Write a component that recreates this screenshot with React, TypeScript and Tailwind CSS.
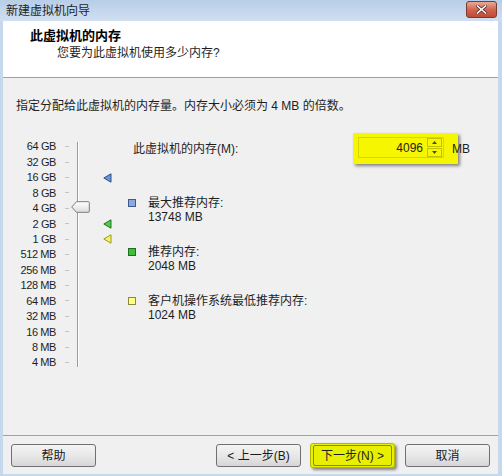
import React from "react"

const rows = [
  "64 GB", "32 GB", "16 GB", "8 GB", "4 GB", "2 GB", "1 GB", "512 MB",
  "256 MB", "128 MB", "64 MB", "32 MB", "16 MB", "8 MB", "4 MB",
]

function Marker({ fill, stroke }: { fill: string; stroke: string }) {
  return (
    <svg width="9" height="10" viewBox="0 0 9 10">
      <path d="M0.8 5 L8 0.8 V9.2 Z" fill={fill} stroke={stroke} strokeWidth="1" strokeLinejoin="round" />
    </svg>
  )
}

function Legend({ box, label, value }: { box: string; label: string; value: string }) {
  return (
    <div className="flex leading-[14px]">
      <div className={`mt-[3px] h-[8px] w-[8px] border ${box}`} />
      <div className="ml-[12px]">
        <div>{label}</div>
        <div>{value}</div>
      </div>
    </div>
  )
}

function Button({ children, className = "" }: { children: React.ReactNode; className?: string }) {
  return (
    <div
      className={`flex h-[23px] w-[85px] items-center justify-center rounded-[3px] border border-[#707070] bg-gradient-to-b from-[#f4f4f4] via-[#e8e8e8] to-[#d6d6d6] text-[12px] text-[#1a1a1a] ${className}`}
    >
      {children}
    </div>
  )
}

export default function App() {
  return (
    <div className="flex h-[476px] w-[502px] flex-col bg-[#c6d8ec] pb-[2px] pl-[3px] pr-[4px] font-['Liberation_Sans','Noto_Sans_CJK_SC',sans-serif] text-[12px] text-[#1e1e1e]">
      {/* Title bar */}
      <div className="-ml-[3px] -mr-[4px] flex h-[21px] items-start bg-gradient-to-b from-[#b8cee7] to-[#cfdff1] pl-[6px] pr-[5px]">
        <span className="mt-[3px] leading-[16px]">新建虚拟机向导</span>
        <div className="ml-auto mt-[1px] flex h-[17px] w-[31px] items-center justify-center rounded-[3px] border border-[#7a3a30] bg-gradient-to-b from-[#e9a99a] via-[#d0664f] to-[#c24a35]">
          <svg width="11" height="9" viewBox="0 0 11 9">
            <path d="M1.5 1 L9.5 8 M9.5 1 L1.5 8" stroke="#5a2a22" strokeWidth="3" strokeLinecap="square" />
            <path d="M1.5 1 L9.5 8 M9.5 1 L1.5 8" stroke="#ffffff" strokeWidth="1.6" strokeLinecap="square" />
          </svg>
        </div>
      </div>

      {/* Header */}
      <div className="h-[57px] border-b border-[#a0a0a0] bg-white">
        <div className="pl-[27px] pt-[7px] text-[13px] font-bold leading-[16px] text-black">此虚拟机的内存</div>
        <div className="pl-[54px] pt-[1px] leading-[16px]">您要为此虚拟机使用多少内存?</div>
      </div>

      {/* Body */}
      <div className="flex-1 bg-[#f0f0f0]">
        <div className="pl-[13px] pt-[20px] leading-[16px]">指定分配给此虚拟机的内存量。内存大小必须为 4 MB 的倍数。</div>

        <div className="mt-[19px] flex">
          {/* Slider */}
          <div className="relative flex pt-[6px]">
            <div className="w-[53px] text-right text-[11px] tracking-[-0.4px]">
              {rows.map((r) => (
                <div key={r} className="flex h-[15.43px] items-center justify-end">{r}</div>
              ))}
            </div>
            <div className="ml-[9px] w-[4px]">
              {rows.map((r) => (
                <div key={r} className="flex h-[15.43px] items-center">
                  <div className="h-px w-[4px] bg-[#c4c4c4]" />
                </div>
              ))}
            </div>
            <div className="my-[3px] ml-[8px] w-[2px] border-l border-[#9a9a9a] bg-white" />
            <div className="ml-[24px] w-[9px]">
              {rows.map((r, i) => (
                <div key={r} className="flex h-[15.43px] items-center">
                  {i === 2 && <Marker fill="#6f95d0" stroke="#2d4f8e" />}
                  {i === 5 && <Marker fill="#55c455" stroke="#1f7a1f" />}
                  {i === 6 && <Marker fill="#f4f46a" stroke="#9a9a1e" />}
                </div>
              ))}
            </div>
            {/* thumb */}
            <svg className="absolute left-[68px] top-[68px]" width="19" height="12" viewBox="0 0 19 12">
              <defs>
                <linearGradient id="th" x1="0" y1="0" x2="0" y2="1">
                  <stop offset="0" stopColor="#ffffff" />
                  <stop offset="1" stopColor="#dcdcdc" />
                </linearGradient>
              </defs>
              <path d="M0.7 6 L5.5 0.7 H17.5 Q18.3 0.7 18.3 1.5 V10.5 Q18.3 11.3 17.5 11.3 H5.5 Z" fill="url(#th)" stroke="#7c7c7c" strokeWidth="1" />
            </svg>
          </div>

          {/* Right column */}
          <div className="ml-[16px] flex flex-col">
            <div className="flex h-[31px] items-center">
              <div className="w-[225px] pl-[5px]">此虚拟机的内存(M):</div>
              <div className="flex h-[31px] w-[105px] items-start bg-[#f6f600] pl-[5px] pt-[4px] shadow-[2px_2px_3px_rgba(0,0,0,0.45)]">
                <div className="flex h-[21px] w-[86px] items-center border border-[#d6d600] pr-[1px]">
                  <span className="flex-1 pr-[4px] text-right">4096</span>
                  <div className="flex h-[19px] w-[15px] flex-col gap-px">
                    <div className="flex flex-1 items-center justify-center border border-[#c2c200]">
                      <svg width="5" height="3" viewBox="0 0 5 3"><path d="M0 3 L2.5 0 L5 3 Z" fill="#4a4a30" /></svg>
                    </div>
                    <div className="flex flex-1 items-center justify-center border border-[#c2c200]">
                      <svg width="5" height="3" viewBox="0 0 5 3"><path d="M0 0 L2.5 3 L5 0 Z" fill="#4a4a30" /></svg>
                    </div>
                  </div>
                </div>
              </div>
              <span className="relative -ml-[6px]">MB</span>
            </div>

            <div className="mt-[32px] flex flex-col gap-[21px]">
              <Legend box="bg-[#8eaad8] border-[#3a5a90]" label="最大推荐内存:" value="13748 MB" />
              <Legend box="bg-[#3cc03c] border-[#1c6f1c]" label="推荐内存:" value="2048 MB" />
              <Legend box="bg-[#ffff84] border-[#8a8a3a]" label="客户机操作系统最低推荐内存:" value="1024 MB" />
            </div>
          </div>
        </div>
      </div>

      {/* Footer */}
      <div className="flex h-[39px] items-start border-t border-[#a0a0a0] bg-[#f0f0f0] pl-[8px] pt-[8px]">
        <Button>帮助</Button>
        <Button className="ml-[120px]">&lt; 上一步(B)</Button>
        <div className="ml-[9px] flex h-[25px] w-[85px] -mt-[1px] items-center justify-center rounded-[3px] border border-[#b8b800] bg-[#e8f000] shadow-[2px_2px_3px_rgba(0,0,0,0.45)]">
          <div className="flex h-[21px] w-[79px] items-center justify-center rounded-[2px] border border-[#4d86b8]">下一步(N) &gt;</div>
        </div>
        <Button className="ml-[10px]">取消</Button>
      </div>
    </div>
  )
}
